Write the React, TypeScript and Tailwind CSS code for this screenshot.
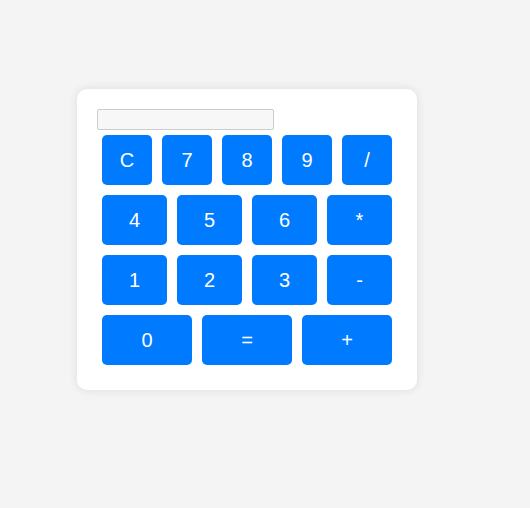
import React, { useState } from "react";

const rows: string[][] = [
  ["C", "7", "8", "9", "/"],
  ["4", "5", "6", "*"],
  ["1", "2", "3", "-"],
  ["0", "=", "+"],
];

export default function App() {
  const [value, setValue] = useState("");

  const press = (key: string) => {
    if (key === "C") return setValue("");
    if (key === "=") {
      try {
        // eslint-disable-next-line no-new-func
        setValue(String(Function(`return (${value})`)()));
      } catch {
        setValue("Error");
      }
      return;
    }
    setValue((v) => v + key);
  };

  return (
    <div className="min-h-[508px] bg-[#f4f4f4] pt-[89px] pl-[77px] font-['Liberation_Sans',Arial,sans-serif]">
      <div className="w-[340px] rounded-[10px] bg-white p-5 shadow-[0_0_10px_rgba(0,0,0,0.1)]">
        <input
          type="text"
          readOnly
          value={value}
          className="block h-[21px] w-[177px] rounded-[2px] border border-[#cccccc] bg-[#f7f7f7] px-1 text-sm"
        />
        {rows.map((row, i) => (
          <div key={i} className="flex">
            {row.map((key) => (
              <button
                key={key}
                onClick={() => press(key)}
                className="m-[5px] flex h-[50px] flex-1 items-center justify-center rounded-[5px] bg-[#007bff] text-[20px] text-white"
              >
                {key}
              </button>
            ))}
          </div>
        ))}
      </div>
    </div>
  );
}
